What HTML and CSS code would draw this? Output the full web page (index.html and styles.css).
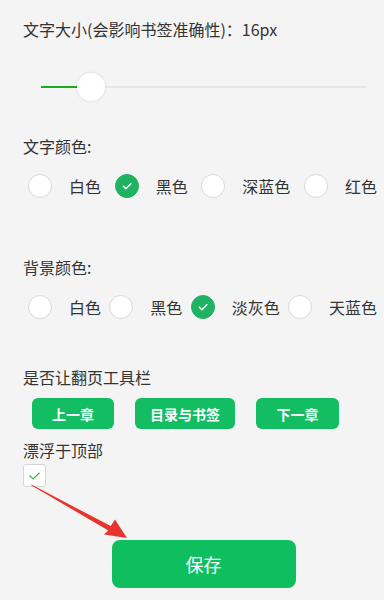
FILE: index.html
```html
<!DOCTYPE html>
<html lang="zh-CN">
<head>
<meta charset="utf-8">
<title>设置</title>
<link rel="stylesheet" href="styles.css">
</head>
<body>
<div class="page">
  <div class="label title">文字大小(会影响书签准确性)：16px</div>
  <div class="slider">
    <div class="track"><div class="fill"></div></div>
    <div class="knob"></div>
  </div>

  <div class="label sec-text">文字颜色:</div>
  <div class="radio-group">
    <label class="radio-item"><span class="radio"></span><span>白色</span></label>
    <label class="radio-item"><span class="radio checked"><svg viewBox="0 0 24 24"><path d="M8 12.3l2.8 2.7L16.2 9.6" /></svg></span><span>黑色</span></label>
    <label class="radio-item"><span class="radio"></span><span>深蓝色</span></label>
    <label class="radio-item"><span class="radio"></span><span>红色</span></label>
  </div>

  <div class="label sec-bg">背景颜色:</div>
  <div class="radio-group">
    <label class="radio-item"><span class="radio"></span><span>白色</span></label>
    <label class="radio-item"><span class="radio"></span><span>黑色</span></label>
    <label class="radio-item"><span class="radio checked"><svg viewBox="0 0 24 24"><path d="M8 12.3l2.8 2.7L16.2 9.6" /></svg></span><span>淡灰色</span></label>
    <label class="radio-item"><span class="radio"></span><span>天蓝色</span></label>
  </div>

  <div class="label sec-toolbar">是否让翻页工具栏</div>
  <div class="btn-row">
    <button class="btn">上一章</button>
    <button class="btn">目录与书签</button>
    <button class="btn">下一章</button>
  </div>
  <div class="label sec-float">漂浮于顶部</div>
  <span class="checkbox"><svg viewBox="0 0 23 23"><path d="M6 11.5l4 3.8L17 8.5" /></svg></span>

  <div class="save-wrap"><button class="save">保存</button></div>

  <svg class="arrow" width="384" height="600" viewBox="0 0 384 600">
    <polygon points="31,484.3 110.7,526.1 115,519.5 127,538 104,534.5 108.3,530.5 31.6,485.6" />
  </svg>
</div>
</body>
</html>
```

FILE: styles.css
```css
html, body {
  margin: 0;
  padding: 0;
  background: #f4f4f4;
}

body {
  font-family: "Noto Sans CJK SC", "Noto Sans", sans-serif;
  color: #333333;
  font-size: 16px;
}

.page {
  position: relative;
  padding: 17px 0 12px 23px;
}

.label {
  line-height: 24px;
  height: 24px;
  font-size: 16px;
}

.slider {
  position: relative;
  margin: 32px 18px 0 18px;
  height: 28px;
}

.track {
  position: absolute;
  left: 0;
  right: 0;
  top: 13px;
  height: 2px;
  background: #e6e6e6;
}

.fill {
  width: 36px;
  height: 2px;
  background: #1aad19;
}

.knob {
  position: absolute;
  left: 36px;
  top: 0;
  width: 28px;
  height: 28px;
  border-radius: 50%;
  background: #ffffff;
  box-shadow: 0 0 3px rgba(0, 0, 0, 0.12);
}

.sec-text {
  margin-top: 33px;
}

.radio-group {
  display: flex;
  justify-content: space-between;
  margin: 16px 7px 0 5px;
  height: 24px;
}

.radio-item {
  display: flex;
  align-items: center;
  gap: 17px;
  line-height: 24px;
}

.radio {
  width: 22px;
  height: 22px;
  border: 1px solid #d9d9d9;
  border-radius: 50%;
  background: #ffffff;
  display: flex;
  align-items: center;
  justify-content: center;
}

.radio.checked {
  background: #1fb263;
  border-color: #1fb263;
}

.radio svg {
  width: 24px;
  height: 24px;
  fill: none;
  stroke: #ffffff;
  stroke-width: 1.6;
  stroke-linecap: round;
  stroke-linejoin: round;
}

.sec-bg {
  margin-top: 57px;
}

.sec-toolbar {
  margin-top: 46px;
}

.btn-row {
  display: flex;
  gap: 21px;
  margin: 9px 0 0 9px;
}

.btn {
  height: 31px;
  min-width: 82px;
  padding: 0 15px;
  border: none;
  border-radius: 6px;
  background: #13bd62;
  color: #ffffff;
  font-family: "Noto Sans CJK SC", sans-serif;
  font-size: 14px;
  font-weight: bold;
}

.btn:last-child {
  min-width: 83px;
}

.sec-float {
  margin-top: 9px;
}

.checkbox {
  display: flex;
  align-items: center;
  justify-content: center;
  margin-top: 2px;
  width: 21px;
  height: 21px;
  border: 1px solid #d6d6d6;
  border-radius: 3px;
  background: #ffffff;
}

.checkbox svg {
  width: 23px;
  height: 23px;
  fill: none;
  stroke: #3cb44a;
  stroke-width: 1.3;
}

.save-wrap {
  display: flex;
  justify-content: center;
  margin-top: 53px;
}

.save {
  width: 184px;
  height: 48px;
  border: none;
  border-radius: 8px;
  background: #0fbf5f;
  color: #ffffff;
  font-family: "Noto Sans CJK SC", sans-serif;
  font-size: 18px;
}

.arrow {
  position: absolute;
  left: 0;
  top: 0;
  pointer-events: none;
}

.arrow polygon {
  fill: #e8342f;
}
```
